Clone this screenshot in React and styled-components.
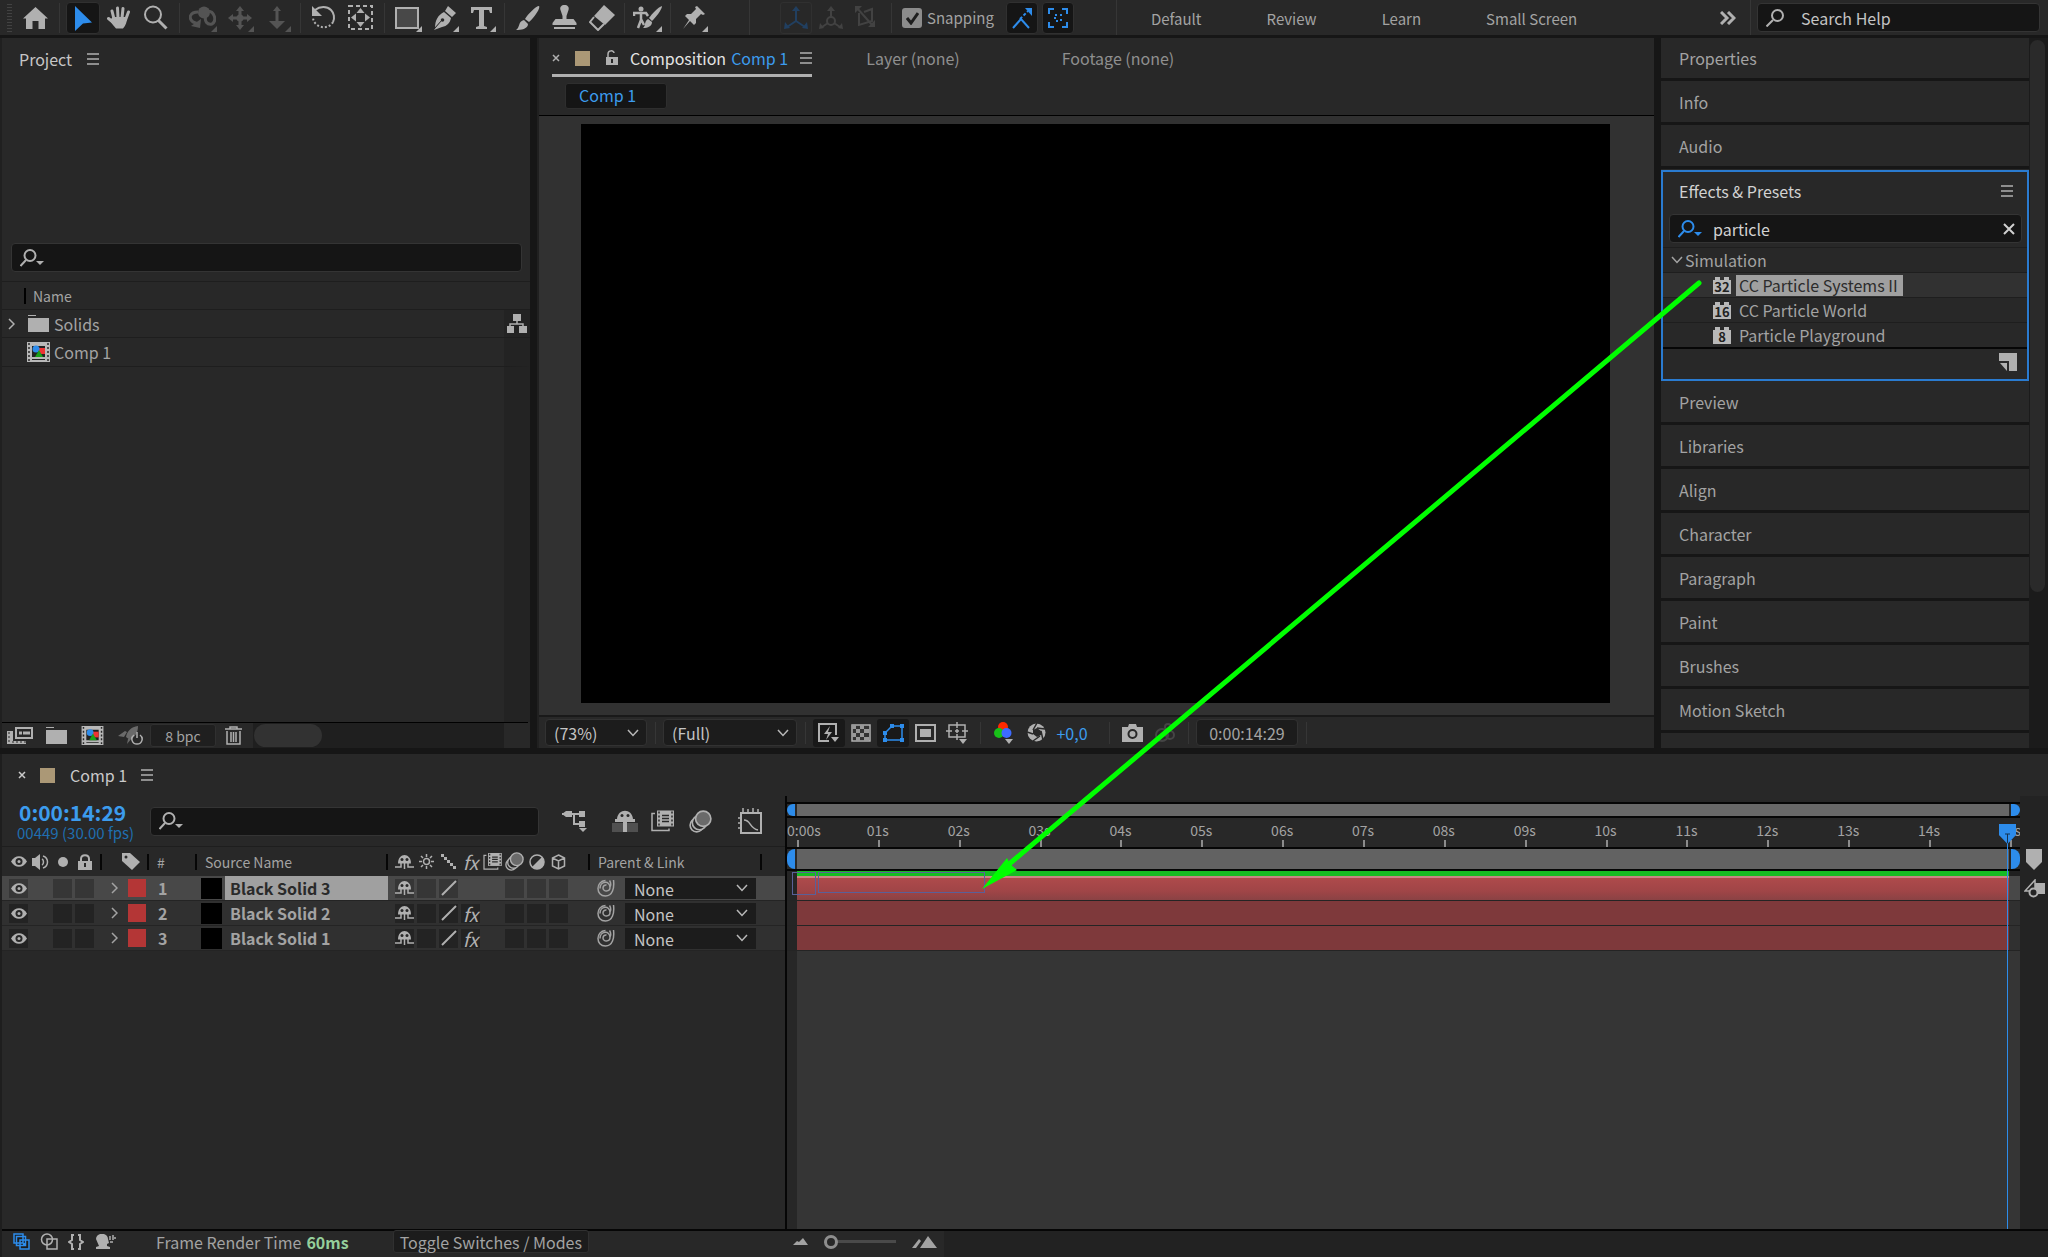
import React, { useState } from 'react';
import styled, { createGlobalStyle, css } from 'styled-components';

const c = {
  panel: '#282828',
  gap: '#161616',
  field: '#151515',
  rim: '#343434',
  icon: '#b0b0b0',
  text: '#a3a3a3',
  bright: '#d2d2d2',
  blue: '#2d8ceb',
  hot: '#3c9cee',
};

const Global = createGlobalStyle`
  *, *::before, *::after { box-sizing: border-box; }
  html, body, #root { height: 100%; }
  body { margin: 0; background: ${c.gap}; overflow: hidden; }
  body, button, input, select {
    font-family: "Noto Sans CJK SC", "Open Sans", sans-serif;
    font-size: 16px;
    line-height: 20px;
    color: ${c.text};
  }
  button, input, select { margin: 0; padding: 0; border: 0; background: none; outline: none; }
  svg { display: block; flex: none; }
  h2 { margin: 0; font: inherit; }
`;

/* ---------- icons ---------- */

const Svg = ({ w, h, children, ...rest }) => (
  <svg width={w} height={h} viewBox={`0 0 ${w} ${h}`} fill="none" aria-hidden="true" {...rest}>{children}</svg>
);
const F = 'currentColor';
const S = { stroke: 'currentColor', strokeWidth: 2 };

const Home = () => <Svg w={25} h={22}><path fill={F} d="M12.500 0 25 11.500h-3V22h-6.500v-8h-6v8H3V11.500H0z" /></Svg>;
const Arrow = () => <Svg w={20} h={26}><path fill={F} d="M2 1 19 17.500l-9 1L2 26z" /></Svg>;
const Hand = () => (
  <Svg w={24} h={24}><g stroke={F} strokeWidth="3" strokeLinecap="round">
    <path d="m7 13-2-8M11 12 10.500 2M15 12l1-9.500M18.500 14l3-8M7 17l-5.500-4.500" /></g>
    <path fill={F} d="M5.500 11h14.500c0 5-1 8-4 11.500h-7C7 20 5 18 3 14.500z" /></Svg>
);
const Magnifier = () => <Svg w={25} h={25}><circle cx="10" cy="9.500" r="8" {...S} /><path {...S} strokeWidth="3" d="m15.500 15.500 8 8" /></Svg>;
const Orbit = () => <Svg w={27} h={23}><path {...S} strokeWidth="3" d="M9 6C1 6-1 12 4 16l5 2M18 5c8 0 10 10 5 13-5 1-8-3-6-8" /><path fill={F} d="m12 13-1 9-9-2z" /><circle cx="15" cy="6.500" r="6" fill={F} /></Svg>;
const Pan = () => <Svg w={24} h={24}><path {...S} strokeWidth="3" d="M12 4v16M4 12h16" /><path fill={F} d="m12 0 4 5H8zM12 24l4-5H8zM0 12l5-4v8zM24 12l-5-4v8z" /><circle cx="12" cy="12" r="3.500" fill={F} /></Svg>;
const Dolly = () => <Svg w={16} h={24}><path {...S} strokeWidth="3" d="M8 4v14" /><path fill={F} d="m8 0 4 5H4zM0 15h16l-8 8z" /></Svg>;
const Rotate = () => <Svg w={26} h={25}><path {...S} d="M4 5c5-4 12-4 16 0 3 3 4 8 2 12" /><path {...S} strokeDasharray="2 2" d="M22 17c-3 6-12 7-17 2-2-2-3-4-3-7" /><path fill={F} d="M1 1v10h10z" /></Svg>;
const Anchor = () => <Svg w={25} h={25}><path {...S} strokeDasharray="4 3" d="M1 1h23v23H1z" /><path fill={F} d="m12.500 3 4 5h-8zM12.500 22l4-5h-8zM3 12.500l5-4v8zM22 12.500l-5-4v8z" /></Svg>;
const Rect = () => <Svg w={25} h={22}><path {...S} fill="#484848" d="M1 1h22v20H1z" /></Svg>;
const Pen = () => <Svg w={24} h={24}><path fill={F} d="m15 0 8 7-4 4-7-6zM11 6l7 6c-1 5-4 8-9 9l-8 3 6-8-5 6c0-8 3-13 9-16z" /><circle cx="9.500" cy="14" r="1.800" fill={c.panel} /><path stroke={c.panel} d="m9 14-8 9" /></Svg>;
const TypeT = () => <Svg w={21} h={22}><path fill={F} d="M0 0h21v6h-2l-1-3h-5v16l3 1v2H5v-2l3-1V3H3L2 6H0z" /></Svg>;
const Brush = () => <Svg w={24} h={24}><path fill={F} d="M23 0c2 2-6 13-10 16l-4-3C12 8 20 0 23 0zM8 14l4 4c0 5-7 6-12 6 4-2 2-9 8-10z" /></Svg>;
const Stamp = () => <Svg w={25} h={25}><path fill={F} d="M12.500 0c3 0 5 2 4 5l-2 6v3h7l3 4v2H.500v-2l3-4h7v-3l-2-6c-1-3 1-5 4-5zM2 22h21v2H2z" /></Svg>;
const Eraser = () => <Svg w={26} h={26}><path fill={F} d="M15 0 26 10 16 20 5 11z" /><path {...S} d="m5 12-4 5 8 8 6-6" /></Svg>;
const Roto = () => <Svg w={29} h={25}><circle cx="8" cy="4" r="2.500" fill={F} /><path {...S} strokeWidth="2.500" d="M1 11V8h12l2 3M8 8v7l-3 8M8 14l3 6" /><path fill={F} d="M29 1c0 4-7 12-10 15l-3-3C19 9 25 2 29 1zM15 14l4 3c0 4-4 6-9 6 3-2 1-7 5-9z" /></Svg>;
const Pin = () => <Svg w={22} h={23}><path fill={F} d="m14 0 8 8-2 1-2-1-5 5v4l-2 2-4-4-7 8 6-9-4-4 2-2h4l5-5-1-2z" /></Svg>;
const Axes = () => <Svg w={24} h={24}><path {...S} d="M12 3v12l-9 6M12 15l9 6" /><path fill={F} d="m12 0 4 5H8zM0 23l1-7 5 6zM24 23l-1-7-5 6z" /></Svg>;
const AxesWorld = () => <Svg w={24} h={24}><path {...S} d="M12 3v9M9 17l-6 4M15 17l6 4" /><circle cx="12" cy="15" r="4" {...S} /><path fill={F} d="m12 0 4 5H8zM0 23l1-6 4 5zM24 23l-1-6-4 5z" /></Svg>;
const AxesView = () => <Svg w={22} h={24}><path {...S} d="M4 7v12l13-4V3L9 6M2 2l16 18" /><path fill={F} d="M0 0h7L0 7zM20 21h-7l7-7z" /></Svg>;
const SnapLine = () => <Svg w={22} h={22}><path {...S} d="m2 21 8-9 8 9" /><path {...S} strokeDasharray="3 2" d="m9 12 8-8" /><path fill={F} d="M14 1h7v8z" /></Svg>;
const SnapBox = () => <Svg w={20} h={20}><path {...S} d="M1 6V1h5M14 1h5v5M19 14v5h-5M6 19H1v-5" /><path {...S} strokeDasharray="2 3" d="M7 7h6v6H7z" /></Svg>;
const Chevrons = () => <Svg w={16} h={14}><path {...S} strokeWidth="3" d="m1 1 6 6-6 6M8 1l6 6-6 6" /></Svg>;
const Search = () => <Svg w={18} h={18}><circle cx="11.500" cy="6.500" r="5.500" {...S} /><path {...S} d="m7 11-6.500 6.500" /></Svg>;
const SearchMenu = () => <Svg w={25} h={18}><circle cx="10" cy="6.500" r="5.500" {...S} /><path {...S} d="m6 11-5.500 6" /><path fill={F} d="M16 12h8l-4 4z" /></Svg>;
const Menu = () => <Svg w={12} h={12}><path {...S} strokeWidth="1.500" d="M0 1h13M0 6h13M0 11h13" /></Svg>;
const Close = ({ s = 8 }) => <Svg w={s} h={s}><path {...S} strokeWidth={s > 10 ? 2 : 1.5} d={`M1 1 ${s - 1} ${s - 1}M${s - 1} 1 1 ${s - 1}`} /></Svg>;
const Unlock = () => <Svg w={13} h={16}><path {...S} strokeWidth="1.500" d="M3 8V4c0-4 6-4 6-1" /><path fill={F} d="M1 7h12v8H1z" /><path stroke={c.panel} strokeWidth="2" d="M7 9v4" /></Svg>;
const Lock = () => <Svg w={14} h={16}><path {...S} d="M3 8V5c0-5 8-5 8 0v3" /><path fill={F} d="M0 7h14v9H0z" /><path stroke={c.panel} strokeWidth="2" d="M7 9v4" /></Svg>;
const Right = () => <Svg w={7} h={12}><path {...S} strokeWidth="1.500" d="m1 1 5 5-5 5" /></Svg>;
const Down = () => <Svg w={12} h={8}><path {...S} strokeWidth="1.500" d="m1 1 5 5.500L11 1" /></Svg>;
const Folder = () => <Svg w={21} h={17}><path fill={F} d="M0 0h8v1H0zM0 3h21v14H0z" /></Svg>;
const CompFile = ({ w = 23, h = 20 }) => (
  <svg width={w} height={h} viewBox="0 0 23 20" aria-hidden="true">
    <path fill="#b8b8b8" d="M0 0h23v20H0z" /><path stroke="#282828" strokeWidth="1.500" strokeDasharray="2 2" d="M2 1v19M21 1v19" />
    <path fill="#222" d="M5 4h13v11H5zM5 17h13v1H5z" /><path fill="#e33" d="M12 6h6v6h-6z" /><circle cx="9" cy="7" r="3.500" fill="#2d8ceb" /><path fill="#1aa01a" d="m12 8 4 7H8z" />
  </svg>
);
const Tree = () => <Svg w={20} h={19}><path fill={F} d="M6 0h8v7H6zM0 12h7v7H0zM12 12h8v7h-8z" /><path stroke={F} strokeWidth="1.500" d="M10 7v3M3 13v-3h13v3" /></Svg>;
const Interpret = () => <Svg w={26} h={19}><path {...S} d="M9 2h16v10H9z" /><path stroke={F} strokeWidth="3" d="M12 7h3M16 7h7" /><path fill={F} d="M0 5h6v10h13v3H0z" /><path stroke="#282828" strokeDasharray="2 2" d="M2 6v12M5 16h14" /></Svg>;
const Rocket = () => <Svg w={25} h={20}><path fill="#6a6a6a" d="M20 0c0 7-3 11-8 14l-4-3c1-6 5-10 12-11zM0 10l7-5 2 1-3 5zM9 18l1-5 4-1z" /><path stroke={F} strokeWidth="1.500" d="M16 9c-4 3-2 9 3 9s7-6 3-9M19 6v6" /></Svg>;
const Trash = () => <Svg w={17} h={19}><path {...S} strokeWidth="1.500" d="M0 3h17M5 3V1h7v2M2 5v13h13V5M6 6v10M8.500 6v10M11 6v10" /></Svg>;
const Brick = () => <Svg w={18} h={17}><path fill="#b8b8b8" d="M0 3h2V0h5v3h4V0h5v3h2v14H0z" /></Svg>;
const NewBin = () => <Svg w={18} h={18}><path fill={F} d="M0 0h18v18h-8V8H0z" /><path fill={F} d="M1 10h7v8z" /></Svg>;
const Fast = () => <Svg w={22} h={20}><path {...S} d="M18 12V1H1v17h10" /><path fill={F} d="m12 3-6 8h4l-2 6 6-8h-4zM13 14h8l-4 5z" /></Svg>;
const Checker = () => <Svg w={20} h={18}><path stroke={F} strokeWidth="1.500" fill="#333" d="M1 1h18v16H1z" /><path fill="#999" d="M1 1h4v4H1zM9 1h4v4H9zM5 5h4v4H5zM13 5h5v4h-5zM1 9h4v4H1zM9 9h4v4H9zM5 13h4v4H5zM13 13h5v4h-5z" /></Svg>;
const Mask = () => <Svg w={21} h={18}><path stroke={F} strokeWidth="1.500" d="M2 16V9l7-7h10v14z" /><path fill={F} d="M0 14h4v4H0zM0 7h4v4H0zM7 0h4v4H7zM17 0h4v4h-4zM17 14h4v4h-4z" /></Svg>;
const Region = () => <Svg w={21} h={18}><path {...S} d="M1 1h19v16H1z" /><path fill={F} d="M5 5h11v8H5z" /></Svg>;
const Grid = () => <Svg w={22} h={22}><path {...S} strokeWidth="1.500" d="M3 3h16v12H3zM11 0v6M11 12v6M0 9h6M16 9h6M9 9h4M11 7v4" /><path fill={F} d="M13 17h8l-4 5z" /></Svg>;
const Rgb = () => <Svg w={20} h={22}><circle cx="9" cy="5" r="5" fill="#ff2a00" /><circle cx="5" cy="11" r="5" fill="#18c018" /><circle cx="12.500" cy="11" r="5" fill="#3d6bff" /><path fill={F} d="M11 17h8l-4 5z" /></Svg>;
const Aperture = () => <Svg w={19} h={19}><circle cx="9.500" cy="9.500" r="9" fill={F} /><path fill={c.panel} d="m6 7 4-2 4 3v4l-4 2-4-3z" /><path stroke={c.panel} strokeWidth="1.500" d="m6 7 4-7M10 5l8 1M14 8l2 9M13 13l-7 5M6 11 0 9" /></Svg>;
const Camera = () => <Svg w={21} h={18}><path fill={F} d="M0 3h6l1-3h7l1 3h6v15H0z" /><circle cx="10.500" cy="10" r="4" stroke={c.panel} strokeWidth="2" /></Svg>;
const Ghost = () => <Svg w={21} h={19}><circle cx="8" cy="12" r="6" {...S} /><circle cx="14" cy="4" r="3" {...S} /><circle cx="16" cy="12" r="4" {...S} /></Svg>;
const Flow = () => <Svg w={26} h={22}><path {...S} d="M0 4h20M12 4v10h8" /><path fill={F} d="M4 1h6v6H4zM17 1h6v6h-6zM17 11h6v6h-6zM17 18h8l-4 4zM0 4l4-3v6z" /></Svg>;
const Shy = () => <Svg w={19} h={16}><path fill={F} d="M3 9.500C3-2 16-2 16 9.500z" /><circle cx="7" cy="5.500" r="1.500" fill="#282828" /><circle cx="12" cy="5.500" r="1.500" fill="#282828" /><path {...S} strokeWidth="1.500" d="M0 13h6V9M19 13h-6V9M9.500 9v6" /></Svg>;
const ShyBig = () => <Svg w={26} h={22}><path fill="#505050" d="M0 13h26v9H0z" /><path fill={F} d="M5 9C6-2 20-2 21 9h2v3H3V9zM11 10h4v12h-4z" /><circle cx="10" cy="5.500" r="1.500" fill="#282828" /><circle cx="16" cy="5.500" r="1.500" fill="#282828" /></Svg>;
const Film = ({ big }) => (
  <svg width={big ? 23 : 19} height={big ? 24 : 17} viewBox="0 0 23 21" aria-hidden="true"><path stroke={F} fill="none" strokeWidth="1.500" d="M4 3H1v17h17v-2" /><path fill={F} d="M6 0h17v16H6z" /><path stroke="#282828" strokeDasharray="2 2" strokeWidth="1.500" d="M8 1v15M21 1v15" /><path stroke="#282828" strokeWidth="1.500" d="M11 5h7M11 8h7M11 11h7" /></svg>
);
const Blur = ({ s = 19 }) => <svg width={s} height={s} viewBox="0 0 21 21" fill="none" aria-hidden="true"><g stroke={F} strokeWidth="1.500"><circle cx="7" cy="14" r="6" /><circle cx="9.500" cy="11.500" r="6.500" fill="#282828" /><circle cx="13" cy="8" r="7" fill="#6a6a6a" /></g></svg>;
const Graph = () => <Svg w={25} h={27}><path {...S} d="M3 5h20v20H3z" /><path stroke={F} strokeWidth="1.500" d="M6 12c7 0 5 8 14 10M5 0v4M10 1v4M15 0v4M20 1v4M0 10h3M0 15h3M0 20h3" /></Svg>;
const Eye = () => <Svg w={16} h={11}><path fill={F} d="M0 5.500c4-7 12-7 16 0-4 7-12 7-16 0z" /><circle cx="8" cy="5.500" r="3.500" fill="#282828" /><circle cx="8" cy="5.500" r="1.500" fill={F} /></Svg>;
const Audio = () => <Svg w={18} h={16}><path fill={F} d="M0 4h3l5-4v16l-5-4H0z" /><path {...S} strokeWidth="1.500" d="M10 5c2 1 2 5 0 6M11 2c6 2 6 10 0 12" /></Svg>;
const Dot = () => <Svg w={10} h={10}><circle cx="5" cy="5" r="5" fill={F} /></Svg>;
const Tag = () => <Svg w={18} h={17}><path fill={F} d="M0 0h8l10 9-8 8L0 8z" /><circle cx="4" cy="4" r="1.500" fill="#282828" /></Svg>;
const Sun = () => <Svg w={15} h={15}><circle cx="7.500" cy="7.500" r="3" {...S} strokeWidth="1.500" /><path stroke={F} strokeWidth="1.500" d="M7.500 0v3M7.500 12v3M0 7.500h3M12 7.500h3M2 2l2 2M11 11l2 2M13 2l-2 2M2 13l2-2" /></Svg>;
const Stairs = () => <Svg w={15} h={15}><path fill={F} d="M0 0h3v3H0zM3 3h3v3H3zM6 6h3v3H6zM9 9h3v3H9zM12 12h3v3h-3z" /></Svg>;
const Slash = () => <Svg w={16} h={16}><path {...S} d="M1 15 15 1" /></Svg>;
const Half = () => <Svg w={16} h={16}><circle cx="8" cy="8" r="7" stroke={F} strokeWidth="1.500" /><path fill={F} d="M13 3A7 7 0 1 1 3 13z" /></Svg>;
const Cube = () => <Svg w={15} h={16}><path stroke={F} strokeWidth="1.500" d="m7.500 1 6 3v8l-6 3-6-3V4zM1.500 4l6 3 6-3M7.500 7v8" /></Svg>;
const Spiral = () => <Svg w={18} h={18}><path stroke={F} strokeWidth="1.500" d="M9.500 6A3 3 0 0 0 6 9c0 4 7 4 7-.500C13 1 3 2 3 9.500M13 8c1-2 .500-5-.500-6.500M16.500 1c1 8-1 16-8 16C-1.500 17-1.500 2 8.500 1.500" /></Svg>;
const MarkerIcon = () => <Svg w={16} h={21}><path fill={F} d="M0 0h16v13l-8 8-8-8z" /></Svg>;
const Shapes = () => <Svg w={21} h={19}><path fill={F} d="M11 4h10v11H11z" /><path stroke={F} strokeWidth="1.500" d="M1 12 11 1v11z" /><circle cx="9.500" cy="13.500" r="4" {...S} fill="#242424" /></Svg>;
const Stack = () => <Svg w={17} h={17}><path stroke={F} strokeWidth="1.500" fill="#1c1c1c" d="M1 1h9v9H1zM3.500 3.500h9v9h-9zM7 7h9v9H7z" /><path fill={F} d="M10 10h3v3h-3z" /></Svg>;
const Overlap = () => <Svg w={18} h={17}><circle cx="7" cy="6.500" r="5.500" stroke={F} strokeWidth="1.500" /><path stroke={F} strokeWidth="1.500" d="M7 6h10v10H7z" /></Svg>;
const Braces = () => <Svg w={16} h={16}><path {...S} d="M6 1H4v5L1 8l3 2v5h2M10 1h2v5l3 2-3 2v5h-2" /></Svg>;
const Head = () => <Svg w={20} h={15}><path fill={F} d="M0 5c0-7 12-7 12 0l1 4-2 1v2l3 1v2H0v-2l3-1z" /><path stroke={F} strokeWidth="1.500" d="M14 2v4M17 1v5M19 3v2M14 8h3" /></Svg>;
const HillS = () => <Svg w={15} h={7}><path fill={F} d="m0 7 4-4 2 1 4-4 5 7z" /></Svg>;
const HillL = () => <Svg w={25} h={12}><path fill={F} d="m8 12 8-12 9 12zM0 12 7 3l2 2-5 7z" /></Svg>;

/* ---------- shell ---------- */

const App_ = styled.div`
  display: grid;
  grid-template-rows: 35px minmax(0, 713fr) minmax(0, 509fr);
  height: 100vh;
  position: relative;
  color: ${c.text};
  background: ${c.gap};
`;
const Toolbar = styled.header`
  display: flex;
  align-items: center;
  padding: 0 8px 0 7px;
  background: ${c.panel};
  white-space: nowrap;
`;
const Grip = styled.span`
  width: 5px; height: 28px; margin-right: 5px;
  background: repeating-linear-gradient(#424242 0 1px, transparent 1px 3px);
`;
const Sep = styled.span`
  flex: none;
  width: 1px; height: ${p => p.$h || 30}px;
  margin: 0 ${p => p.$r ?? 4}px 0 ${p => p.$l ?? 4}px;
  background: #363636;
`;
const Tool = styled.button`
  display: flex; align-items: center; justify-content: center;
  flex: none;
  width: ${p => p.$w || 37}px; height: 32px;
  color: ${p => (p.$off ? '#545454' : c.icon)};
  position: relative;
  ${p => p.$on && css`background: ${c.field}; color: ${c.blue}; border: 1px solid #303030; border-radius: 4px;`}
  ${p => p.$framed && css`color: #213f60; border: 1px solid #303030; border-radius: 3px;`}
  ${p => p.$dim && css`color: #424242;`}
  ${p => p.$more && css`&::after {
    content: ''; position: absolute; right: 4px; bottom: 2px;
    border: 3px solid; border-color: transparent currentColor currentColor transparent;
  }`}
`;
const Snap = styled.label`
  display: flex; align-items: center; gap: 5px;
  margin-right: 12px;
  font-size: 15px;
  position: relative;
  svg { position: absolute; left: 4px; top: 4px; pointer-events: none; color: #1e1e1e; }
`;
const Check = styled.input`
  appearance: none;
  width: 20px; height: 20px;
  border-radius: 3px;
  background: #8c8c8c;
`;
const Workspaces = styled.nav`
  display: flex; gap: 65px; margin: 2px 0 0 34px;
`;
const TextButton = styled.button`
  color: ${c.text};
  font-size: 15px;
`;
const Push = styled.span`flex: 1;`;
const Field = styled.label`
  display: flex; align-items: center;
  gap: ${p => p.$gap || 10}px;
  flex: ${p => (p.$w ? 'none' : 1)};
  width: ${p => (p.$w ? p.$w + 'px' : 'auto')};
  min-width: 0;
  height: 29px;
  padding: 0 ${p => p.$pr || 4}px 0 8px;
  background: ${c.field};
  border: 1px solid ${c.rim};
  border-radius: 4px;
  color: ${p => p.$tone || c.icon};
`;
const Input = styled.input`
  flex: 1; min-width: 0; height: 24px;
  color: ${c.bright};
  &::placeholder { color: #c4c4c4; opacity: 1; }
`;

const Upper = styled.main`
  display: grid;
  grid-template-columns: 530px minmax(0, 1fr) 387px;
  grid-template-rows: minmax(0, 1fr);
  column-gap: 7px;
  min-height: 0;
  padding-top: 3px;
`;
const Panel = styled.section`
  display: flex; flex-direction: column;
  min-width: 0; min-height: 0;
  background: ${c.panel};
  border-left: 2px solid #202020;
`;
const PanelTitle = styled.div`
  display: flex; align-items: center; gap: 15px;
  height: 42px;
  padding-left: 17px;
  color: #c6c6c6;
`;
const IconButton = styled.button`
  display: flex; align-items: center; justify-content: center;
  flex: none;
  width: ${p => p.$w || 'auto'}; height: ${p => p.$h || 'auto'};
  color: ${p => p.$tone || c.icon};
`;
const SearchRow = styled.div`
  display: flex;
  padding: 163px 8px 9px 9px;
`;

/* ---------- project ---------- */

const Files = styled.table`
  width: 100%;
  border-collapse: collapse;
  table-layout: fixed;
  text-align: left;
  tr { border-top: 1px solid #1e1e1e; }
  th, td { padding: 0; height: 28px; font-weight: 400; }
  th { font-size: 14px; padding-left: 31px; background: linear-gradient(#000, #000) 22px center / 2px 16px no-repeat; }
  td:last-child { background: #232323; }
`;
const FileName = styled.div`
  display: flex; align-items: center;
  height: 27px;
  padding-left: 6px;
`;
const Slot = styled.span`
  display: flex; align-items: center; justify-content: ${p => p.$align || 'center'};
  flex: none;
  width: ${p => p.$w}px;
  color: ${c.icon};
`;
const Fill = styled.div`
  display: flex; flex: 1; min-height: 0;
  border-right: 26px solid #232323;
  border-top: 1px solid #1e1e1e;
`;
const ProjectBar = styled.footer`
  display: flex; align-items: center;
  flex: none;
  height: 26px; margin: 0 2px 0 0;
  padding-left: 5px;
  gap: 13px;
  border-top: 1px solid #000;
`;
const Depth = styled.button`
  width: 66px; height: 23px;
  margin: 0 -4px 0 -6px;
  font-size: 14px;
  background: #1f1f1f; border: 1px solid #303030; border-radius: 3px;
`;
const Scroller = styled.div`
  flex: 1; height: 25px; margin-right: 24px; margin-left: -2px;
  padding: 1px;
  background: #1f1f1f;
  &::before { content: ''; display: block; width: 68px; height: 23px; border-radius: 12px; background: #323232; }
`;

/* ---------- composition ---------- */

const Tabs = styled.div`
  display: flex; align-items: flex-start;
  height: 39px;
  padding-left: 13px;
`;
const Tab = styled.button`
  display: flex; align-items: center;
  height: 39px;
  padding: 6px 0 2px;
  margin-right: ${p => p.$mr || 0}px;
  color: ${p => (p.$active ? '#e4e4e4' : '#8f8f8f')};
  border-bottom: 3px solid ${p => (p.$active ? '#b0b0b0' : 'transparent')};
  svg { color: ${c.icon}; }
`;
const Swatch = styled.span`
  flex: none;
  width: ${p => p.$s || 15}px; height: ${p => p.$s || 15}px;
  margin-left: ${p => p.$l || 0}px;
  background: ${p => p.$c || '#ab9876'};
`;
const Hot = styled.span`color: ${c.hot}; margin: 0 12px 0 5px;`;
const Gap = styled.span`flex: none; width: ${p => p.$w}px;`;
const Crumbs = styled.div`
  height: 39px;
  padding: 6px 0 0 26px;
  border-bottom: 1px solid #000;
`;
const Crumb = styled.button`
  width: 102px; height: 26px;
  padding: 0 0 2px 13px;
  text-align: left;
  color: ${c.hot};
  background: ${c.field}; border: 1px solid #2e2e2e; border-radius: 3px;
`;
const Viewer = styled.div`
  display: flex; flex: 1; min-height: 0;
  padding: 8px 44px 12px 42px;
  background: #313131;
`;
const Frame = styled.div`flex: 1; background: #000;`;
const ViewBar = styled.footer`
  display: flex; align-items: center;
  height: 33px;
  padding: 0 6px;
  border-top: 2px solid #191919;
`;
const Pick = styled.span`
  display: inline-flex; align-items: center;
  flex: none;
  position: relative;
  width: ${p => p.$w}px; height: ${p => p.$h || 27}px;
  background: #1c1c1c;
  border: 1px solid ${p => (p.$flat ? '#1c1c1c' : '#323232')}; border-radius: ${p => (p.$flat ? 0 : 4)}px;
  svg { position: absolute; right: 7px; pointer-events: none; color: #b8b8b8; }
`;
const Select = styled.select`
  appearance: none;
  width: 100%; height: 100%;
  padding-left: 8px;
  color: #c4c4c4;
`;
const ViewButton = styled.button`
  display: flex; align-items: center; justify-content: center;
  flex: none;
  width: 32px; height: 28px;
  color: ${p => (p.$on ? c.blue : p.$off ? '#454545' : c.icon)};
  background: ${p => (p.$on || p.$dark ? '#191919' : 'none')};
  border-radius: 3px;
`;
const HotButton = styled.button`width: 40px; color: ${c.hot}; text-align: center;`;
const TimeButton = styled.button`
  flex: none;
  width: 102px; height: 27px;
  background: #1c1c1c; border: 1px solid #323232; border-radius: 4px;
`;

/* ---------- right dock ---------- */

const Dock = styled.aside`
  display: grid;
  grid-template-columns: minmax(0, 1fr) 19px;
  grid-template-rows: minmax(0, 1fr);
  min-height: 0;
`;
const Stackup = styled.div`overflow: hidden; background: ${c.panel};`;
const Closed = styled.button`
  display: block;
  width: 100%; height: ${p => p.$h || 44}px;
  padding: 0 0 0 18px;
  text-align: left;
  border-bottom: 3px solid ${c.gap};
`;
const ScrollTrack = styled.div`
  padding: 2px 3px 0 1px;
  background: #1b1b1b;
  &::before { content: ''; display: block; height: 78%; border-radius: 8px; background: #2a2a2a; }
`;
const Effects = styled.section`
  border: 2px solid #2a7bd0;
  margin-top: 1px;
`;
const EffectsHead = styled.div`
  display: flex; align-items: center; justify-content: space-between;
  height: 42px;
  padding: 0 14px 4px 16px;
  color: ${c.bright};
`;
const EffectsSearch = styled.div`display: flex; padding: 0 5px 4px 6px;`;
const Group = styled.button`
  display: flex; align-items: center; gap: 2px;
  width: 100%; height: 25px; padding-left: 8px;
  border-top: 1px solid #1e1e1e;
`;
const EffectList = styled.ul`list-style: none; margin: 0; padding: 0; border-bottom: 2px solid #060606;`;
const Effect = styled.li`
  display: flex; align-items: center; gap: 5px;
  height: 25px; padding-left: 50px;
  border-top: 1px solid #1e1e1e;
  background: ${p => (p.$on ? '#313131' : 'none')};
`;
const Badge = styled.span`
  display: grid; place-items: center;
  width: 18px;
  > * { grid-area: 1 / 1; }
  > span { color: #222; font-size: 13px; font-weight: 700; line-height: 13px; padding-top: 3px; }
`;
const EffectName = styled.button`
  height: 21px; padding: 0 5px 0 3px;
  line-height: 19px;
  ${p => p.$on && css`background: #a0a0a0; color: #2c2c2c;`}
`;
const EffectsFoot = styled.div`display: flex; justify-content: flex-end; align-items: center; height: 30px; padding: 0 10px 4px 0;`;

/* ---------- timeline ---------- */

const Timeline = styled.section`
  display: flex; flex-direction: column;
  min-height: 0;
  margin-top: 6px;
  background: ${c.panel};
  border-left: 2px solid #1e1e1e;
`;
const TimelineTabs = styled.div`
  display: flex; align-items: center;
  flex: none;
  height: 42px; padding: 0 0 0 16px;
  color: #cacaca;
`;
const TimelineBody = styled.div`
  display: grid;
  grid-template-columns: 785px minmax(0, 1fr) 28px;
  grid-template-rows: minmax(0, 1fr);
  flex: 1; min-height: 0;
`;
const Outline = styled.div`min-width: 0; border-right: 2px solid #060606;`;
const Controls = styled.div`
  display: flex; align-items: center;
  height: 50px;
  padding-left: 15px;
  color: ${c.icon};
`;
const Clock = styled.div`
  display: flex; flex-direction: column;
  width: 133px;
`;
const Timecode = styled.button`
  height: 24px; padding-left: 2px;
  font-size: 21px; line-height: 22px; font-weight: 700; color: ${c.hot}; text-align: left;
`;
const FrameNo = styled.span`font-size: 15px; line-height: 18px; color: #1f6fb0;`;
const Layers = styled.table`
  width: 783px;
  border-collapse: separate; border-spacing: 0;
  table-layout: fixed;
  text-align: left;
  th, td { padding: 0; }
`;
const HeadCell = styled.th`
  height: 30px;
  font-size: 14px; font-weight: 400;
  border-top: 1px solid #1e1e1e;
  background: ${p => (p.$last ? 'none' : 'linear-gradient(#060606, #060606) right center / 2px 16px no-repeat')};
`;
const Layer = styled.tr`
  > td {
    height: 25px;
    background: ${p => (p.$on ? '#484848' : '#303030')};
    border-bottom: 1px solid #242424;
  }
  font-weight: 700;
`;
const Line = styled.div`
  display: flex; align-items: center;
  height: 24px;
  gap: ${p => p.$gap ?? 3}px;
  padding-left: ${p => p.$l || 0}px;
`;
const Cell = styled.span`
  display: flex; align-items: center; justify-content: center;
  flex: none;
  width: 19px; height: 19px;
  color: ${c.icon};
  background: ${p => (p.$box ? (p.$on ? '#363636' : '#232323') : 'none')};
`;
const Fx = styled.i`font-size: 19px; line-height: 17px; font-weight: 400; color: ${c.icon};`;
const LayerName = styled.span`
  display: flex; align-items: center;
  flex: 1; height: 24px; padding-left: 5px;
  line-height: 20px;
  ${p => p.$on && css`background: #a0a0a0; color: #2a2a2a;`}
`;

const Track = styled.div`
  display: flex; flex-direction: column;
  position: relative;
  min-width: 0;
  padding-top: 6px;
  overflow: hidden;
`;
const RangeRow = styled.div`
  display: grid;
  grid-template-columns: 8px minmax(0, 1fr) 9px;
  column-gap: 2px;
  flex: none;
  height: ${p => p.$h}px;
  border: solid #060606; border-width: 2px 0;
`;
const Handle = styled.span`
  background: ${c.blue};
  border-radius: ${p => (p.$right ? '0 8px 8px 0' : '8px 0 0 8px')};
`;
const Range = styled.span`background: ${p => p.$c};`;
const Ruler = styled.ol`
  display: flex;
  flex: none;
  list-style: none;
  height: 29px;
  margin: 0 9px 0 10px; padding: 0;
  font-size: 14px;
`;
const Tick = styled.li`
  flex: 1 1 0; min-width: 0;
  &:last-child { flex: 0 0 1px; }
  span { display: block; width: 48px; margin-left: -24px; padding-top: 3px; line-height: 19px; text-align: center; }
  &:first-child span { margin-left: -10px; text-align: left; }
  &::after { content: ''; display: block; width: 2px; height: 7px; background: #8c8c8c; }
`;
const Lane = styled.div`
  flex: none;
  height: ${p => p.$h || 25}px;
  padding: 0 11px 0 10px;
  background: linear-gradient(90deg, #252525 10px, ${p => p.$bg || '#303030'} 10px);
  border-bottom: ${p => (p.$h ? 0 : 1)}px solid #242424;
`;
const Bar = styled.div`
  height: 100%;
  background: ${p => p.$bg};
  border-top: ${p => (p.$edge ? `2px solid ${p.$edge}` : 0)};
`;
const Empty = styled.div`
  flex: 1;
  background: linear-gradient(90deg, #272727 10px, #353535 10px);
`;
const Playhead = styled.div`
  position: absolute; right: 4px; top: 28px; bottom: 0;
  width: 17px;
  display: flex; flex-direction: column; align-items: center;
  color: ${c.blue};
  &::after { content: ''; flex: 1; width: 1px; background: ${c.blue}; }
`;
const DropBox = styled.div`
  position: absolute; top: 76px; left: ${p => p.$x}px;
  width: ${p => p.$w}px; height: ${p => p.$h}px;
  border: 1px solid #5a6098;
`;
const Side = styled.div`
  display: flex; flex-direction: column; align-items: center; gap: 9px;
  padding: 53px 0 0 0;
  color: ${c.icon};
  background: #232323;
`;
const Status = styled.footer`
  display: flex; align-items: center;
  flex: none;
  height: 28px;
  padding: 0 0 5px 10px;
  border-top: 2px solid #060606;
  background: linear-gradient(90deg, ${c.panel} 942px, #222 942px);
`;
const Good = styled.b`color: #95cf9b; margin: 0 44px 0 5px;`;
const Toggle = styled.button`
  height: 23px; padding: 0 6px;
  background: #1c1c1c; border: 1px solid #303030; border-radius: 3px;
  line-height: 20px;
`;
const Zoom = styled.input`
  appearance: none;
  width: 72px; height: 16px; margin: 0 16px;
  background: linear-gradient(#4a4a4a, #4a4a4a) center / 100% 3px no-repeat;
  &::-webkit-slider-thumb {
    appearance: none; width: 14px; height: 14px; border-radius: 50%;
    border: 3px solid #8e8e8e; background: ${c.panel};
  }
`;
const Guide = styled.svg`
  position: absolute; left: 0; top: 0; pointer-events: none;
`;

const layers = ['Black Solid 3', 'Black Solid 2', 'Black Solid 1'];
const effects = [['32', 'CC Particle Systems II'], ['16', 'CC Particle World'], ['8', 'Particle Playground']];
const closedPanels = ['Preview', 'Libraries', 'Align', 'Character', 'Paragraph', 'Paint', 'Brushes', 'Motion Sketch', 'Smoother'];
const seconds = ['0:00s', ...Array.from({ length: 15 }, (_, i) => `${String(i + 1).padStart(2, '0')}s`)];

function TopBar() {
  return (
    <Toolbar>
      <Grip />
      <Tool aria-label="Home"><Home /></Tool>
      <Sep $l={5} $r={6} />
      <Tool $on $w={34} aria-label="Selection"><Arrow /></Tool>
      <Tool aria-label="Hand"><Hand /></Tool>
      <Tool aria-label="Zoom"><Magnifier /></Tool>
      <Sep $l={5} />
      <Tool $off $more aria-label="Orbit"><Orbit /></Tool>
      <Tool $off $more aria-label="Pan"><Pan /></Tool>
      <Tool $off $more aria-label="Dolly"><Dolly /></Tool>
      <Sep $l={5} />
      <Tool aria-label="Rotate"><Rotate /></Tool>
      <Tool aria-label="Anchor point"><Anchor /></Tool>
      <Sep $l={5} />
      <Tool $more aria-label="Rectangle"><Rect /></Tool>
      <Tool $more aria-label="Pen"><Pen /></Tool>
      <Tool $more aria-label="Type"><TypeT /></Tool>
      <Sep />
      <Tool aria-label="Brush"><Brush /></Tool>
      <Tool aria-label="Clone stamp"><Stamp /></Tool>
      <Tool aria-label="Eraser"><Eraser /></Tool>
      <Sep />
      <Tool $more aria-label="Roto brush"><Roto /></Tool>
      <Sep />
      <Tool $more aria-label="Puppet pin"><Pin /></Tool>
      <Sep $h={35} $l={37} $r={30} />
      <Tool $framed $w={32} aria-label="Local axis"><Axes /></Tool>
      <Tool $dim aria-label="World axis"><AxesWorld /></Tool>
      <Tool $dim $w={34} aria-label="View axis"><AxesView /></Tool>
      <Sep $l={8} $r={10} />
      <Snap>
        <Check type="checkbox" defaultChecked />
        <Svg w={13} h={13}><path {...S} strokeWidth="3" d="m1 6 4 5 7-10" /></Svg>
        Snapping
      </Snap>
      <Tool $on $w={32} aria-label="Snap edges"><SnapLine /></Tool>
      <Gap $w={4} />
      <Tool $on $w={32} aria-label="Snap features"><SnapBox /></Tool>
      <Sep $h={35} $l={42} $r={0} />
      <Workspaces aria-label="Workspaces">
        {['Default', 'Review', 'Learn', 'Small Screen'].map(w => <TextButton key={w}>{w}</TextButton>)}
      </Workspaces>
      <Push />
      <IconButton aria-label="More workspaces"><Chevrons /></IconButton>
      <Sep $h={35} $l={14} $r={6} />
      <Field $w={283} $gap={17}>
        <Search />
        <Input aria-label="Search Help" placeholder="Search Help" />
      </Field>
    </Toolbar>
  );
}

function Project() {
  return (
    <Panel>
      <PanelTitle><h2>Project</h2><IconButton aria-label="Panel menu"><Menu /></IconButton></PanelTitle>
      <SearchRow><Field><SearchMenu /><Input aria-label="Search project" /></Field></SearchRow>
      <Files>
        <colgroup><col /><col style={{ width: 26 }} /></colgroup>
        <thead><tr><th colSpan={2}>Name</th></tr></thead>
        <tbody>
          <tr>
            <td><FileName><Slot $w={20} $align="flex-start"><Right /></Slot><Slot $w={21}><Folder /></Slot><Gap $w={5} />Solids</FileName></td>
            <td><IconButton $w="26px" aria-label="Flowchart"><Tree /></IconButton></td>
          </tr>
          <tr>
            <td><FileName><Gap $w={19} /><Slot $w={23}><CompFile /></Slot><Gap $w={4} />Comp 1</FileName></td>
            <td />
          </tr>
        </tbody>
      </Files>
      <Fill />
      <ProjectBar>
        <IconButton aria-label="Interpret footage"><Interpret /></IconButton>
        <IconButton aria-label="New folder"><Folder /></IconButton>
        <IconButton aria-label="New composition"><CompFile w={25} h={19} /></IconButton>
        <IconButton aria-label="Project settings"><Rocket /></IconButton>
        <Depth>8 bpc</Depth>
        <IconButton aria-label="Delete"><Trash /></IconButton>
        <Scroller />
      </ProjectBar>
    </Panel>
  );
}

function Composition() {
  return (
    <Panel>
      <Tabs>
        <Tab $active $mr={54}>
          <Close /><Swatch $l={15} /><Gap $w={15} /><Unlock /><Gap $w={12} />Composition<Hot>Comp 1</Hot><Menu />
        </Tab>
        <Tab $mr={102}>Layer (none)</Tab>
        <Tab>Footage (none)</Tab>
      </Tabs>
      <Crumbs><Crumb>Comp 1</Crumb></Crumbs>
      <Viewer><Frame /></Viewer>
      <ViewBar>
        <Pick $w={102}><Select aria-label="Magnification"><option>(73%)</option></Select><Down /></Pick>
        <Sep $h={22} $l={8} $r={7} />
        <Pick $w={134}><Select aria-label="Resolution"><option>(Full)</option></Select><Down /></Pick>
        <Sep $h={22} $l={8} $r={7} />
        <ViewButton $dark aria-label="Fast previews"><Fast /></ViewButton>
        <ViewButton aria-label="Transparency grid"><Checker /></ViewButton>
        <ViewButton $on aria-label="Mask visibility"><Mask /></ViewButton>
        <ViewButton aria-label="Region of interest"><Region /></ViewButton>
        <ViewButton aria-label="Guides"><Grid /></ViewButton>
        <Sep $h={22} $l={7} $r={7} />
        <ViewButton aria-label="Channels"><Rgb /></ViewButton>
        <ViewButton aria-label="Exposure reset"><Aperture /></ViewButton>
        <HotButton>+0,0</HotButton>
        <Sep $h={22} $l={17} $r={6} />
        <ViewButton aria-label="Snapshot"><Camera /></ViewButton>
        <ViewButton $off aria-label="Show snapshot"><Ghost /></ViewButton>
        <Sep $h={22} $l={8} $r={7} />
        <TimeButton>0:00:14:29</TimeButton>
        <Sep $h={22} $l={8} $r={0} />
      </ViewBar>
    </Panel>
  );
}

function RightDock() {
  const [query, setQuery] = useState('particle');
  return (
    <Dock>
      <Stackup>
        <Closed $h={43}>Properties</Closed>
        <Closed>Info</Closed>
        <Closed>Audio</Closed>
        <Effects>
          <EffectsHead><h2>Effects &amp; Presets</h2><IconButton aria-label="Panel menu"><Menu /></IconButton></EffectsHead>
          <EffectsSearch>
            <Field $tone={c.blue} $gap={10} $pr={6}>
              <SearchMenu />
              <Input aria-label="Search effects" value={query} onChange={e => setQuery(e.target.value)} />
              <IconButton aria-label="Clear" $tone="#d0d0d0" onClick={() => setQuery('')}><Close s={12} /></IconButton>
            </Field>
          </EffectsSearch>
          <Group><Down />Simulation</Group>
          <EffectList>
            {effects.map(([bits, name], i) => (
              <Effect key={name} $on={i === 0}>
                <Badge><Brick /><span>{bits}</span></Badge>
                <EffectName $on={i === 0}>{name}</EffectName>
              </Effect>
            ))}
          </EffectList>
          <EffectsFoot><IconButton aria-label="New bin"><NewBin /></IconButton></EffectsFoot>
        </Effects>
        {closedPanels.map(name => <Closed key={name}>{name}</Closed>)}
      </Stackup>
      <ScrollTrack />
    </Dock>
  );
}

function LayerTable() {
  return (
    <Layers>
      <colgroup>
        {[100, 47, 48, 191, 202, 172, 23].map((w, i) => <col key={i} style={{ width: w }} />)}
      </colgroup>
      <thead>
        <tr>
          <HeadCell aria-label="Layer features"><Line $l={7}><Cell><Eye /></Cell><Cell><Audio /></Cell><Cell><Dot /></Cell><Cell><Lock /></Cell></Line></HeadCell>
          <HeadCell aria-label="Label"><Line $l={19}><Cell><Tag /></Cell></Line></HeadCell>
          <HeadCell><Line $l={8}>#</Line></HeadCell>
          <HeadCell><Line $l={8}>Source Name</Line></HeadCell>
          <HeadCell aria-label="Switches">
            <Line $l={7}>
              <Cell><Shy /></Cell><Cell><Sun /></Cell><Cell><Stairs /></Cell><Cell><Fx>fx</Fx></Cell>
              <Cell><Film /></Cell><Cell><Blur /></Cell><Cell><Half /></Cell><Cell><Cube /></Cell>
            </Line>
          </HeadCell>
          <HeadCell><Line $l={8}>Parent &amp; Link</Line></HeadCell>
          <HeadCell $last />
        </tr>
      </thead>
      <tbody>
        {layers.map((name, i) => {
          const on = i === 0;
          return (
            <Layer key={name} $on={on}>
              <td><Line $l={7}><Cell $box $on={on}><Eye /></Cell><Cell /><Cell $box $on={on} /><Cell $box $on={on} /></Line></td>
              <td><Line $l={9} $gap={10}><Right /><Swatch $s={18} $c="#b43636" /></Line></td>
              <td><Line $l={9}>{i + 1}</Line></td>
              <td><Line $l={4} $gap={3}><Swatch $s={21} $c="#000" /><LayerName $on={on}>{name}</LayerName></Line></td>
              <td>
                <Line $l={7}>
                  <Cell $box $on={on}><Shy /></Cell><Cell $box $on={on} /><Cell $box $on={on}><Slash /></Cell>
                  {on ? <Cell /> : <Cell $box><Fx>fx</Fx></Cell>}
                  <Cell /><Cell $box $on={on} /><Cell $box $on={on} /><Cell $box $on={on} />
                </Line>
              </td>
              <td>
                <Line $l={7} $gap={10}>
                  <Spiral />
                  <Pick $flat $w={131} $h={21}><Select aria-label={`Parent of ${name}`}><option>None</option></Select><Down /></Pick>
                </Line>
              </td>
              <td />
            </Layer>
          );
        })}
      </tbody>
    </Layers>
  );
}

function TimelinePanel() {
  return (
    <Timeline>
      <TimelineTabs>
        <Close /><Swatch $l={14} /><Gap $w={15} />Comp 1<Gap $w={14} /><IconButton aria-label="Panel menu"><Menu /></IconButton>
      </TimelineTabs>
      <TimelineBody>
        <Outline>
          <Controls>
            <Clock><Timecode>0:00:14:29</Timecode><FrameNo>00449 (30.00 fps)</FrameNo></Clock>
            <Field $w={389}><SearchMenu /><Input aria-label="Search layers" /></Field>
            <Gap $w={23} /><IconButton aria-label="Mini flowchart"><Flow /></IconButton>
            <Gap $w={24} /><IconButton aria-label="Hide shy layers"><ShyBig /></IconButton>
            <Gap $w={13} /><IconButton aria-label="Frame blending"><Film big /></IconButton>
            <Gap $w={15} /><IconButton aria-label="Motion blur"><Blur s={23} /></IconButton>
            <Gap $w={26} /><IconButton aria-label="Graph editor"><Graph /></IconButton>
          </Controls>
          <LayerTable />
        </Outline>
        <Track>
          <RangeRow $h={16}><Handle /><Range $c="#686868" /><Handle $right /></RangeRow>
          <Ruler>{seconds.map(s => <Tick key={s}><span>{s}</span></Tick>)}</Ruler>
          <RangeRow $h={24}><Handle /><Range $c="#626262" /><Handle $right /></RangeRow>
          <Lane $h={5} $bg="#202020"><Bar $bg="#16bb22" /></Lane>
          <Lane $bg="#484848"><Bar $bg="linear-gradient(#ae4a4b, #a04547 60%, #8a4244)" $edge="#c98684" /></Lane>
          <Lane><Bar $bg="#7e393b" /></Lane>
          <Lane><Bar $bg="#7e393b" /></Lane>
          <Empty />
          <DropBox $x={5} $w={24} $h={23} />
          <DropBox $x={31} $w={167} $h={21} />
          <Playhead><Svg w={17} h={20}><path fill={F} d="M0 0h17v11l-8.500 9L0 11z" /><path stroke="#14304e" d="M6 10h5M8.500 10v9" /></Svg></Playhead>
        </Track>
        <Side><MarkerIcon /><Shapes /></Side>
      </TimelineBody>
      <Status>
        <IconButton aria-label="Layer switches" $w="18px" $tone={c.blue}><Stack /></IconButton><Gap $w={10} />
        <IconButton aria-label="Transfer controls" $w="18px"><Overlap /></IconButton><Gap $w={10} />
        <IconButton aria-label="In and out"><Braces /></IconButton><Gap $w={12} />
        <IconButton aria-label="Render time"><Head /></IconButton><Gap $w={40} />
        Frame Render Time <Good>60ms</Good>
        <Toggle>Toggle Switches / Modes</Toggle>
        <Gap $w={204} /><HillS />
        <Zoom type="range" min="0" max="100" defaultValue="0" aria-label="Timeline zoom" />
        <HillL />
      </Status>
    </Timeline>
  );
}

export default function App() {
  return (
    <App_>
      <Global />
      <TopBar />
      <Upper><Project /><Composition /><RightDock /></Upper>
      <TimelinePanel />
      <Guide width="2048" height="1257" viewBox="0 0 2048 1257" aria-hidden="true">
        <path d="M1699 283 1008 865" stroke="#00ff00" strokeWidth="5" strokeLinecap="round" />
        <path d="m982 889 25-31 3 6 7 6z" fill="#00ff00" />
      </Guide>
    </App_>
  );
}
